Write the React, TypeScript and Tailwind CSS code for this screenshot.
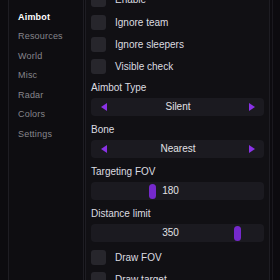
import { useState } from "react";

const NAV = ["Visuals", "Aimbot", "Resources", "World", "Misc", "Radar", "Colors", "Settings"];

function Check({ label, on }: { label: string; on?: boolean }) {
  return (
    <div className="flex h-[15px] items-center">
      <div
        className={`h-[15px] w-[15px] rounded-[3px] ${on ? "bg-[#7a2ed6]" : "bg-[#27262c]"}`}
      />
      <span className="ml-[9px] text-[10px] leading-[12px] text-[#dcdce0]">{label}</span>
    </div>
  );
}

function Arrow({ dir }: { dir: "l" | "r" }) {
  return (
    <svg width="6" height="8" viewBox="0 0 6 8">
      {dir === "l" ? (
        <polygon points="6,0 6,8 0,4" fill="#8a32e6" />
      ) : (
        <polygon points="0,0 0,8 6,4" fill="#8a32e6" />
      )}
    </svg>
  );
}

function Picker({ value }: { value: string }) {
  return (
    <div className="flex h-[18px] items-center justify-between rounded-[4px] bg-[#1b1a20] pl-[10px] pr-[9px]">
      <Arrow dir="l" />
      <span className="text-[10px] leading-[12px] text-[#e2e2e6]">{value}</span>
      <Arrow dir="r" />
    </div>
  );
}

function Slider({ value, pos }: { value: number; pos: number }) {
  return (
    <div className="relative flex h-[18px] items-center justify-center rounded-[4px] bg-[#1b1a20] pr-[14px]">
      <span className="text-[10px] leading-[12px] text-[#e2e2e6]">{value}</span>
      <div
        className="absolute top-[1.5px] h-[15px] w-[7px] rounded-full bg-[#7529cc]"
        style={{ left: pos }}
      />
    </div>
  );
}

function Label({ children }: { children: string }) {
  return <div className="text-[10px] leading-[12px] text-[#dcdce0]">{children}</div>;
}

export default function App() {
  const [active] = useState("Aimbot");

  return (
    <div
      className="flex h-[280px] w-[280px] overflow-hidden bg-[#0c0b0f]"
      style={{ fontFamily: '"Liberation Sans", Arial, sans-serif' }}
    >
      {/* sidebar */}
      <div className="ml-[8px] w-[76px] shrink-0 border-x border-[#1e1d23] bg-[#0e0d11]">
        <div className="-mt-[12px] flex flex-col pl-[9px]">
          {NAV.map((n) => (
            <div
              key={n}
              className={`flex h-[19.5px] items-center text-[9px] tracking-[0.2px] ${
                n === active ? "font-bold text-white" : "text-[#86858c]"
              }`}
            >
              {n}
            </div>
          ))}
        </div>
      </div>

      {/* content */}
      <div className="ml-[1px] w-[185px] shrink-0 border-x border-[#1e1d23] bg-[#111014] px-[5px]">
        <div className="-mt-[8px] flex flex-col">
          <Check label="Enable" on={false} />
          <div className="mt-[8px]"><Check label="Ignore team" /></div>
          <div className="mt-[7px]"><Check label="Ignore sleepers" /></div>
          <div className="mt-[7px]"><Check label="Visible check" /></div>

          <div className="mt-[8px]"><Label>Aimbot Type</Label></div>
          <div className="mt-[4px]"><Picker value="Silent" /></div>

          <div className="mt-[8px]"><Label>Bone</Label></div>
          <div className="mt-[4px]"><Picker value="Nearest" /></div>

          <div className="mt-[8px]"><Label>Targeting FOV</Label></div>
          <div className="mt-[4px]"><Slider value={180} pos={58} /></div>

          <div className="mt-[8px]"><Label>Distance limit</Label></div>
          <div className="mt-[4px]"><Slider value={350} pos={143} /></div>

          <div className="mt-[8px]"><Check label="Draw FOV" /></div>
          <div className="mt-[7px]"><Check label="Draw target" /></div>
        </div>
      </div>

      <div className="ml-[2px] h-full w-[1px] bg-[#1a191f]" />
    </div>
  );
}
